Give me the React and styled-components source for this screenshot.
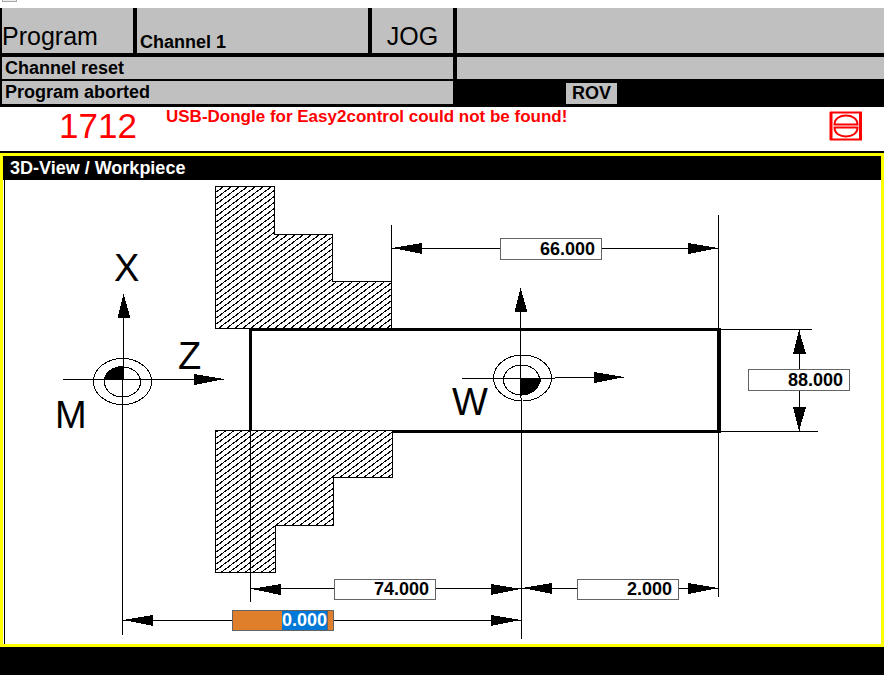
import React, { useEffect, useRef } from "react";
import styled, { createGlobalStyle, css } from "styled-components";

const GlobalStyle = createGlobalStyle`
  *, *::before, *::after { box-sizing: border-box; }
  body {
    margin: 0;
    background: #000;
    color: #000;
    font-family: "Liberation Sans", Arial, sans-serif;
  }
`;

const Screen = styled.div`
  min-height: 100vh;
  display: flex;
  flex-direction: column;
  background: #000;
`;

const WindowEdge = styled.div`
  height: 8px;
  padding-left: 2px;
  background: #fff;
`;

const WindowGrip = styled.div`
  width: 15px;
  height: 2px;
  background: #ececec;
  border: solid #a8a8a8;
  border-width: 0 1px 1px;
`;

const Header = styled.header`
  display: flex;
  flex-direction: column;
  gap: 4px;
  padding: 0 0 3px 2px;
`;

const HeaderGrid = styled.div`
  display: grid;
  grid-template-columns: 131px 231px 81px 1fr;
  grid-template-rows: ${(p) => p.$rows};
  gap: 2px 4px;
`;

const StatusCell = styled.div`
  display: flex;
  align-items: flex-end;
  background: #c0c0c0;
  white-space: nowrap;
  font-size: 18px;
  font-weight: 700;
  line-height: 22px;
  padding-left: 3px;
`;

const ModeCell = styled(StatusCell)`
  justify-content: ${(p) => (p.$centered ? "center" : "flex-start")};
  padding: 0 0 2px;
  font-size: 25px;
  font-weight: 400;
  line-height: 30px;
`;

const StatusLine = styled(StatusCell)`
  grid-column: ${(p) => (p.$wide ? "1 / 4" : "auto")};
  align-items: flex-start;
`;

const Overrides = styled.div`
  display: flex;
  align-items: flex-end;
  padding-left: 109px;
`;

const OverrideFlag = styled.span`
  padding: 0 6px;
  background: #c0c0c0;
  font-size: 18px;
  font-weight: 700;
  line-height: 21px;
`;

const Alarm = styled.section`
  display: flex;
  height: 44px;
  padding-right: 21px;
  background: #fff;
  color: #f00;
`;

const AlarmNumber = styled.span`
  width: 166px;
  padding-left: 59px;
  font-size: 35px;
  line-height: 38px;
`;

const AlarmText = styled.p`
  flex: 1;
  margin: 0;
  font-size: 17px;
  font-weight: 700;
  line-height: 20px;
`;

const AlarmIcon = styled.svg`
  width: 34px;
  height: 30px;
  margin-top: 4px;
`;

const Panel = styled.main`
  margin-top: 2px;
  border: 3px solid #ff0;
  background: #fff;
`;

const PanelTitle = styled.h1`
  margin: 0;
  padding-left: 7px;
  background: #000;
  color: #fff;
  font-size: 18px;
  line-height: 24px;
`;

const Canvas = styled.div`
  position: relative;
  margin-left: 1px;
  border-left: 1px solid #000;
`;

const Diagram = styled.svg`
  display: block;
  width: 100%;
  aspect-ratio: 876 / 464;
  shape-rendering: crispEdges;
`;

const AxisLabel = styled.text`
  font-size: 38px;
`;

const ValueInput = styled.input`
  position: absolute;
  left: calc(100% * ${(p) => p.$x} / 876);
  top: calc(100% * ${(p) => p.$y} / 464);
  width: 102px;
  height: ${(p) => p.$h}px;
  margin: 0;
  padding: 0 6px 0 0;
  border: 1px solid #646464;
  border-radius: 0;
  outline: none;
  background: #fff;
  color: #000;
  font: 700 18px/19px "Liberation Sans", Arial, sans-serif;
  text-align: right;

  &::selection {
    background: #0078d7;
    color: #fff;
  }

  ${(p) =>
    p.$active &&
    css`
      color: #fff;
      background: linear-gradient(#646464, #646464) right 5px top 0 / 1px 100% no-repeat #df7e2b;
    `}
`;

const FIELDS = [
  { label: "Workpiece length", value: "66.000", x: 495, y: 58, h: 22 },
  { label: "Workpiece diameter", value: "88.000", x: 743, y: 189, h: 22 },
  { label: "Chuck to workpiece zero", value: "74.000", x: 329, y: 399, h: 21 },
  { label: "Face allowance", value: "2.000", x: 572, y: 399, h: 21 },
  { label: "Machine zero offset", value: "0.000", x: 227, y: 430, h: 21, active: true },
];

const HEADS = {
  left: "0,0 30,-5 30,6",
  right: "0,0 -30,-5 -30,6",
  up: "0,0 -6,24 7,24",
  down: "0,0 -6,-24 7,-24",
};

function Arrow({ x, y, dir }) {
  return <polygon points={HEADS[dir]} transform={`translate(${x} ${y})`} />;
}

function Drawing() {
  return (
    <Diagram viewBox="5 180 876 464" role="img" aria-label="Workpiece in chuck">
      <defs>
        <pattern id="hatch" width="8" height="6" patternUnits="userSpaceOnUse">
          <path d="M0 5h2v1h-2zM1 4h2v1h-2zM3 3h2v1h-2zM4 2h2v1h-2zM5 1h2v1h-2zM7 0h1v1h-1z" />
        </pattern>
      </defs>

      <g fill="url(#hatch)" stroke="#000">
        <path d="M215.5 186.5H274.5V234.5H332.5V281.5H391.5V328.5H215.5Z" />
      </g>
      <path d="M249 328H721V433H249ZM252 331V430H717V331Z" fillRule="evenodd" />
      <path d="M215.5 430.5H392.5V477.5H333.5V525.5H275.5V572.5H215.5Z" fill="#fff" />
      <path
        d="M215.5 430.5H392.5V477.5H333.5V525.5H275.5V572.5H215.5Z"
        fill="url(#hatch)"
        stroke="#000"
      />

      <g fill="none" stroke="#000">
        <path d="M250.5 430V602M391.5 225V328M718.5 215V597" />
        <path d="M392 248.5H718M721 329.5H812M721 431.5H818M799.5 330V431" />
        <path d="M251 588.5H718M123 620.5H521" />
        <path d="M63 379.5H224M123.5 296V380M122.5 380V635" />
        <path d="M462 378.5H555M555 377.5H624M520.5 290V398M521.5 398V639" />
        <ellipse cx="122.5" cy="381.5" rx="29" ry="23" />
        <ellipse cx="122.5" cy="382" rx="18" ry="15" />
        <ellipse cx="522.5" cy="378" rx="29" ry="23" />
        <ellipse cx="521.5" cy="380" rx="18" ry="15" />
      </g>

      <path d="M104 380A19 14 0 0 1 123 366V380Z" />
      <path d="M521 378H541A20 17 0 0 1 521 395Z" />

      <Arrow x={123.5} y={294} dir="up" />
      <Arrow x={224} y={379} dir="right" />
      <Arrow x={520.5} y={288} dir="up" />
      <Arrow x={624} y={377} dir="right" />
      <Arrow x={392} y={248} dir="left" />
      <Arrow x={718} y={248} dir="right" />
      <Arrow x={799} y={330} dir="up" />
      <Arrow x={799} y={431} dir="down" />
      <Arrow x={251} y={589} dir="left" />
      <Arrow x={521} y={589} dir="right" />
      <Arrow x={522} y={588} dir="left" />
      <Arrow x={718} y={588} dir="right" />
      <Arrow x={123} y={620} dir="left" />
      <Arrow x={521} y={620} dir="right" />

      <AxisLabel x="114" y="281">X</AxisLabel>
      <AxisLabel x="178" y="369">Z</AxisLabel>
      <AxisLabel x="55" y="428">M</AxisLabel>
      <AxisLabel x="452" y="415">W</AxisLabel>
    </Diagram>
  );
}

export default function App() {
  const activeField = useRef(null);

  useEffect(() => {
    activeField.current.focus({ preventScroll: true });
    activeField.current.select();
  }, []);

  return (
    <Screen>
      <GlobalStyle />
      <WindowEdge>
        <WindowGrip />
      </WindowEdge>
      <Header>
        <HeaderGrid $rows="45px">
          <ModeCell>Program</ModeCell>
          <StatusCell>Channel 1</StatusCell>
          <ModeCell $centered>JOG</ModeCell>
          <StatusCell />
        </HeaderGrid>
        <HeaderGrid $rows="22px 23px">
          <StatusLine $wide>Channel reset</StatusLine>
          <StatusLine />
          <StatusLine $wide>Program aborted</StatusLine>
          <Overrides>
            <OverrideFlag>ROV</OverrideFlag>
          </Overrides>
        </HeaderGrid>
      </Header>
      <Alarm role="alert">
        <AlarmNumber>1712</AlarmNumber>
        <AlarmText>USB-Dongle for Easy2control could not be found!</AlarmText>
        <AlarmIcon viewBox="0 0 34 30" fill="none" stroke="#f00" aria-hidden="true">
          <path d="M1 1.5H33M1 28.5H33" strokeWidth="2" />
          <path d="M2 1V29M31.5 1V29" strokeWidth="3" />
          <path
            d="M5.5 13.5C5.5 7.5 11 4.5 17 4.5S28.500 7.500 28.500 13.500ZM5.500 16.500C5.500 22.500 11 25.500 17 25.500S28.500 22.500 28.500 16.500Z"
            strokeWidth="2"
          />
        </AlarmIcon>
      </Alarm>
      <Panel>
        <PanelTitle>3D-View / Workpiece</PanelTitle>
        <Canvas>
          <Drawing />
          {FIELDS.map((f) => (
            <ValueInput
              key={f.label}
              ref={f.active ? activeField : undefined}
              type="text"
              inputMode="decimal"
              aria-label={f.label}
              defaultValue={f.value}
              $x={f.x}
              $y={f.y}
              $h={f.h}
              $active={f.active}
            />
          ))}
        </Canvas>
      </Panel>
    </Screen>
  );
}
